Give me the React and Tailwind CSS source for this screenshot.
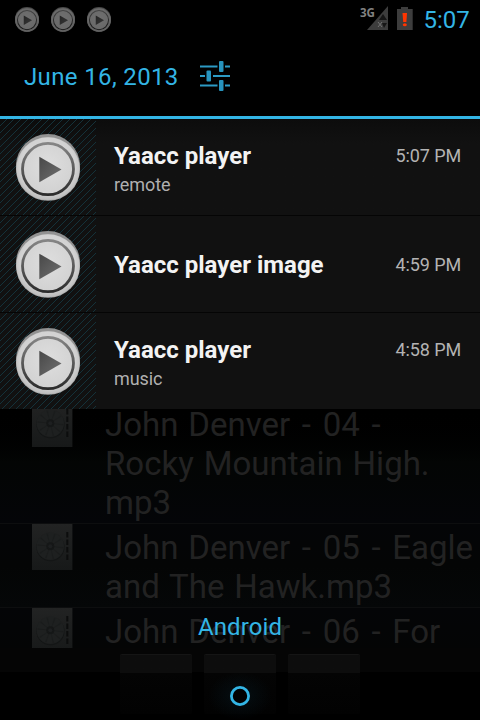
import React from "react";

const notifications = [
  { title: "Yaacc player", text: "remote", time: "5:07 PM" },
  { title: "Yaacc player image", text: "", time: "4:59 PM" },
  { title: "Yaacc player", text: "music", time: "4:58 PM" },
];

const tracks = [
  ["John Denver - 04 -", "Rocky Mountain High.", "mp3"],
  ["John Denver - 05 - Eagle", "and The Hawk.mp3"],
  ["John Denver - 06 - For"],
];

function PlayIcon({ id, className }) {
  return (
    <svg viewBox="0 0 64 68" preserveAspectRatio="none" className={className}>
      <defs>
        <radialGradient id={id + "f"} cx="0.5" cy="0.45" r="0.55">
          <stop offset="0" stopColor="#dedede" />
          <stop offset="0.8" stopColor="#d2d2d2" />
          <stop offset="1" stopColor="#bcbcbc" />
        </radialGradient>
        <linearGradient id={id + "r"} x1="0" y1="0" x2="0" y2="1">
          <stop offset="0" stopColor="#858585" />
          <stop offset="0.5" stopColor="#5a5a5a" />
          <stop offset="1" stopColor="#2c2c2c" />
        </linearGradient>
        <linearGradient id={id + "t"} x1="0" y1="0" x2="1" y2="1">
          <stop offset="0" stopColor="#484848" />
          <stop offset="1" stopColor="#707070" />
        </linearGradient>
      </defs>
      <ellipse cx="32" cy="32.5" rx="32" ry="32.5" fill="#929292" />
      <ellipse cx="32" cy="35.5" rx="32" ry="32.3" fill="#aaa" />
      <ellipse cx="32" cy="35.2" rx="31.6" ry="31.8" fill={`url(#${id}f)`} />
      <ellipse cx="32" cy="35.6" rx="25.5" ry="26" fill="none" stroke={`url(#${id}r)`} strokeWidth="2.8" />
      <path d="M23.3 23 L45.5 36 L23.3 49 Z" fill={`url(#${id}t)`} />
    </svg>
  );
}

function Stripes({ id }) {
  return (
    <svg className="col-start-1 row-start-1 h-24 w-24" shapeRendering="crispEdges">
      <defs>
        <pattern id={id} width="7" height="7" patternUnits="userSpaceOnUse">
          {[0, 1, 2, 3, 4, 5, 6].map((i) => (
            <rect key={i} x={6 - i} y={i} width="1" height="1" fill="#14323a" />
          ))}
        </pattern>
      </defs>
      <rect width="96" height="96" fill={`url(#${id})`} />
    </svg>
  );
}

function AlbumArt({ id, className }) {
  return (
    <svg viewBox="0 0 41 46" className={`ml-[32px] h-[46px] w-[41px] shrink-0 ${className}`}>
      <defs>
        <linearGradient id={id} x1="0" y1="0" x2="0" y2="1">
          <stop offset="0" stopColor="#222323" />
          <stop offset="1" stopColor="#171919" />
        </linearGradient>
      </defs>
      <rect width="40.4" height="46" fill={`url(#${id})`} />
      <circle cx="18.5" cy="23.3" r="14" fill="#141616" />
      <circle cx="18.3" cy="22.3" r="13.7" fill="#1e2020" />
      {[10, 45, 80, 115, 150, 190, 225, 260, 295, 330].map((a) => (
        <path key={a} d="M18.3 22.3 L31 20.7 L31 22.2 Z" fill="#1a1c1c" transform={`rotate(${a} 18.3 22.3)`} />
      ))}
      <circle cx="18.3" cy="22.3" r="4" fill="#151717" />
      <circle cx="18.3" cy="22.3" r="2" fill="#1d1f20" />
      <path d="M35.3 8v28" stroke="#0c0d0d" strokeWidth="2" strokeDasharray="5.5 2" />
    </svg>
  );
}

function TrackLine({ text }) {
  return (
    <div>
      {text.split(/(-)/).map((part, i) =>
        part === "-" ? (
          <span key={i} className="px-[1.8px]">-</span>
        ) : (
          <span key={i}>{part}</span>
        )
      )}
    </div>
  );
}

function StatusBar() {
  return (
    <div className="flex h-[38px] shrink-0">
      <div className="flex gap-[12px] pt-[7px] pl-[15px] opacity-50">
        <PlayIcon id="s0" className="h-[25px] w-[24px]" />
        <PlayIcon id="s1" className="h-[25px] w-[24px]" />
        <PlayIcon id="s2" className="h-[25px] w-[24px]" />
      </div>
      <div className="ml-auto flex pr-[9px]">
        <svg viewBox="0 0 60 38" className="h-[38px] w-[60px]">
          <text x="0" y="17" fontSize="13" fontWeight="700" fill="#828282" fontFamily="Open Sans, sans-serif" textLength="15" lengthAdjust="spacingAndGlyphs">3G</text>
          <path d="M28 6V30H7Z" fill="#3d3d3d" />
          <path d="M19 20l4-6 4 6z M22 23h5l-3 5z" fill="#161616" />
          <path d="M18 22l4 5M22 22l-4 5" stroke="#777" strokeWidth="0.9" />
          <path d="M37 9h4V7h7v2h4.7v21H37z" fill="#3d3d3d" />
          <path d="M42.500 13h4.500l-.6 9h-3.200z" fill="#ff3500" />
          <ellipse cx="44.800" cy="24.700" rx="2" ry="1.500" fill="#ff3500" />
        </svg>
        <div className="ml-[3.500px] w-[47.500px] text-[24px] leading-[40px] whitespace-nowrap">5:07</div>
      </div>
    </div>
  );
}

function SettingsIcon() {
  return (
    <svg viewBox="0 0 30 30" className="mb-[2px] h-[30px] w-[30px]">
      <path d="M0 5.500H17.500M25 5.500H30M0 15H5M13 15H30M0 24.500H17.500M25 24.500H30" stroke="#2c9ac4" strokeWidth="2" />
      <rect x="19" y="0" width="4.500" height="11" rx="1" fill="#2794be" />
      <rect x="6.500" y="9.500" width="4.500" height="11" rx="1" fill="#2794be" />
      <rect x="19" y="19" width="4.500" height="11" rx="1" fill="#2794be" />
    </svg>
  );
}

function Notification({ item, index }) {
  return (
    <div className={`box-content flex h-24 ${index === 0 ? "bg-linear-to-b from-[#0c0c0c] to-[#111111] to-25%" : "bg-[#111111]"}`}>
      <div className="grid h-24 w-24">
        <Stripes id={"stripes" + index} />
        <PlayIcon id={"n" + index} className="col-start-1 row-start-1 mt-[15px] ml-[16px] h-[67px] w-[64px]" />
      </div>
      <div className="ml-[18px] flex h-24 flex-1 flex-col">
        <div className={`flex items-center justify-between pr-[19px] ${item.text ? "mt-[21px]" : "mt-[33px]"}`}>
          <span className="text-[24px] leading-[32px] font-bold text-[#f3f3f3]">{item.title}</span>
          <span className="text-[18px] leading-[32px] tracking-[-0.1px] text-[#b3b3b3]">{item.time}</span>
        </div>
        {item.text && <div className="mt-[1px] text-[18px] leading-[24px] tracking-[-0.1px] text-[#b0b0b0]">{item.text}</div>}
      </div>
    </div>
  );
}

export default function App() {
  return (
    <div className="flex h-[720px] w-[480px] flex-col overflow-hidden bg-black font-['Roboto',sans-serif] text-[#33b5e5]">
      <StatusBar />
      <div className="flex h-[78px] shrink-0 items-center pl-[24px]">
        <div className="w-[176px] text-[24px] leading-[32px] tracking-[0.36px] whitespace-nowrap">June 16, 2013</div>
        <SettingsIcon />
      </div>
      <div className="h-[3px] shrink-0 bg-[#33b5e5]" />
      <div className="h-[290px] shrink-0 divide-y divide-[#050505] bg-[#111111]">
        {notifications.map((n, i) => (
          <Notification key={i} item={n} index={i} />
        ))}
      </div>
      <div className="grid h-[239px] shrink-0 overflow-hidden">
        <div className="col-start-1 row-start-1 -mt-[9px] h-[248px] overflow-hidden">
          {tracks.map((lines, i) => (
            <div key={i} className={`flex border-b border-[#0d0e0f] ${i === 0 ? "h-[124px] bg-linear-to-b from-black via-[#030504] to-[#040508]" : "h-[84px] bg-linear-to-b from-[#040507] via-[#040505] to-[#050708]"}`}>
              <AlbumArt id={"art" + i} className={i === 0 ? "mt-[1px]" : "mt-0"} />
              <div className={`ml-[32px] text-[33px] leading-[39px] [word-spacing:1.700px] whitespace-nowrap text-[#222222] ${i === 0 ? "pt-[5px]" : "pt-[4px]"}`}>
                {lines.map((l) => (
                  <TrackLine key={l} text={l} />
                ))}
              </div>
            </div>
          ))}
        </div>
        <div className="z-10 col-start-1 row-start-1 self-end pb-[5px] text-center text-[24px] leading-[32px] tracking-[0.1px]">Android</div>
      </div>
      <div className="grid h-[72px] shrink-0 bg-linear-to-b from-[#050505] from-[24px] to-black to-[24px]">
        <div className="col-start-1 row-start-1 flex justify-center gap-3 pt-[6px]">
          {[0, 1, 2].map((i) => (
            <div key={i} className="h-[60px] w-[72px] rounded-[2px] border-t border-[#151515] bg-linear-to-b from-[#0d0d0d] from-[18px] via-[#040404] via-[18px] to-[#020202]" />
          ))}
        </div>
        <svg viewBox="0 0 80 48" className="z-10 col-start-1 row-start-1 mt-[24px] h-[48px] w-[80px] justify-self-center">
          <defs>
            <radialGradient id="glow">
              <stop offset="0" stopColor="#08202b" stopOpacity="0.4" />
              <stop offset="1" stopColor="#08202b" stopOpacity="0" />
            </radialGradient>
          </defs>
          <ellipse cx="40" cy="24" rx="32" ry="24" fill="url(#glow)" />
          <circle cx="40" cy="24" r="8.600" fill="#010203" stroke="#33b5e5" strokeWidth="2.800" />
        </svg>
      </div>
    </div>
  );
}
